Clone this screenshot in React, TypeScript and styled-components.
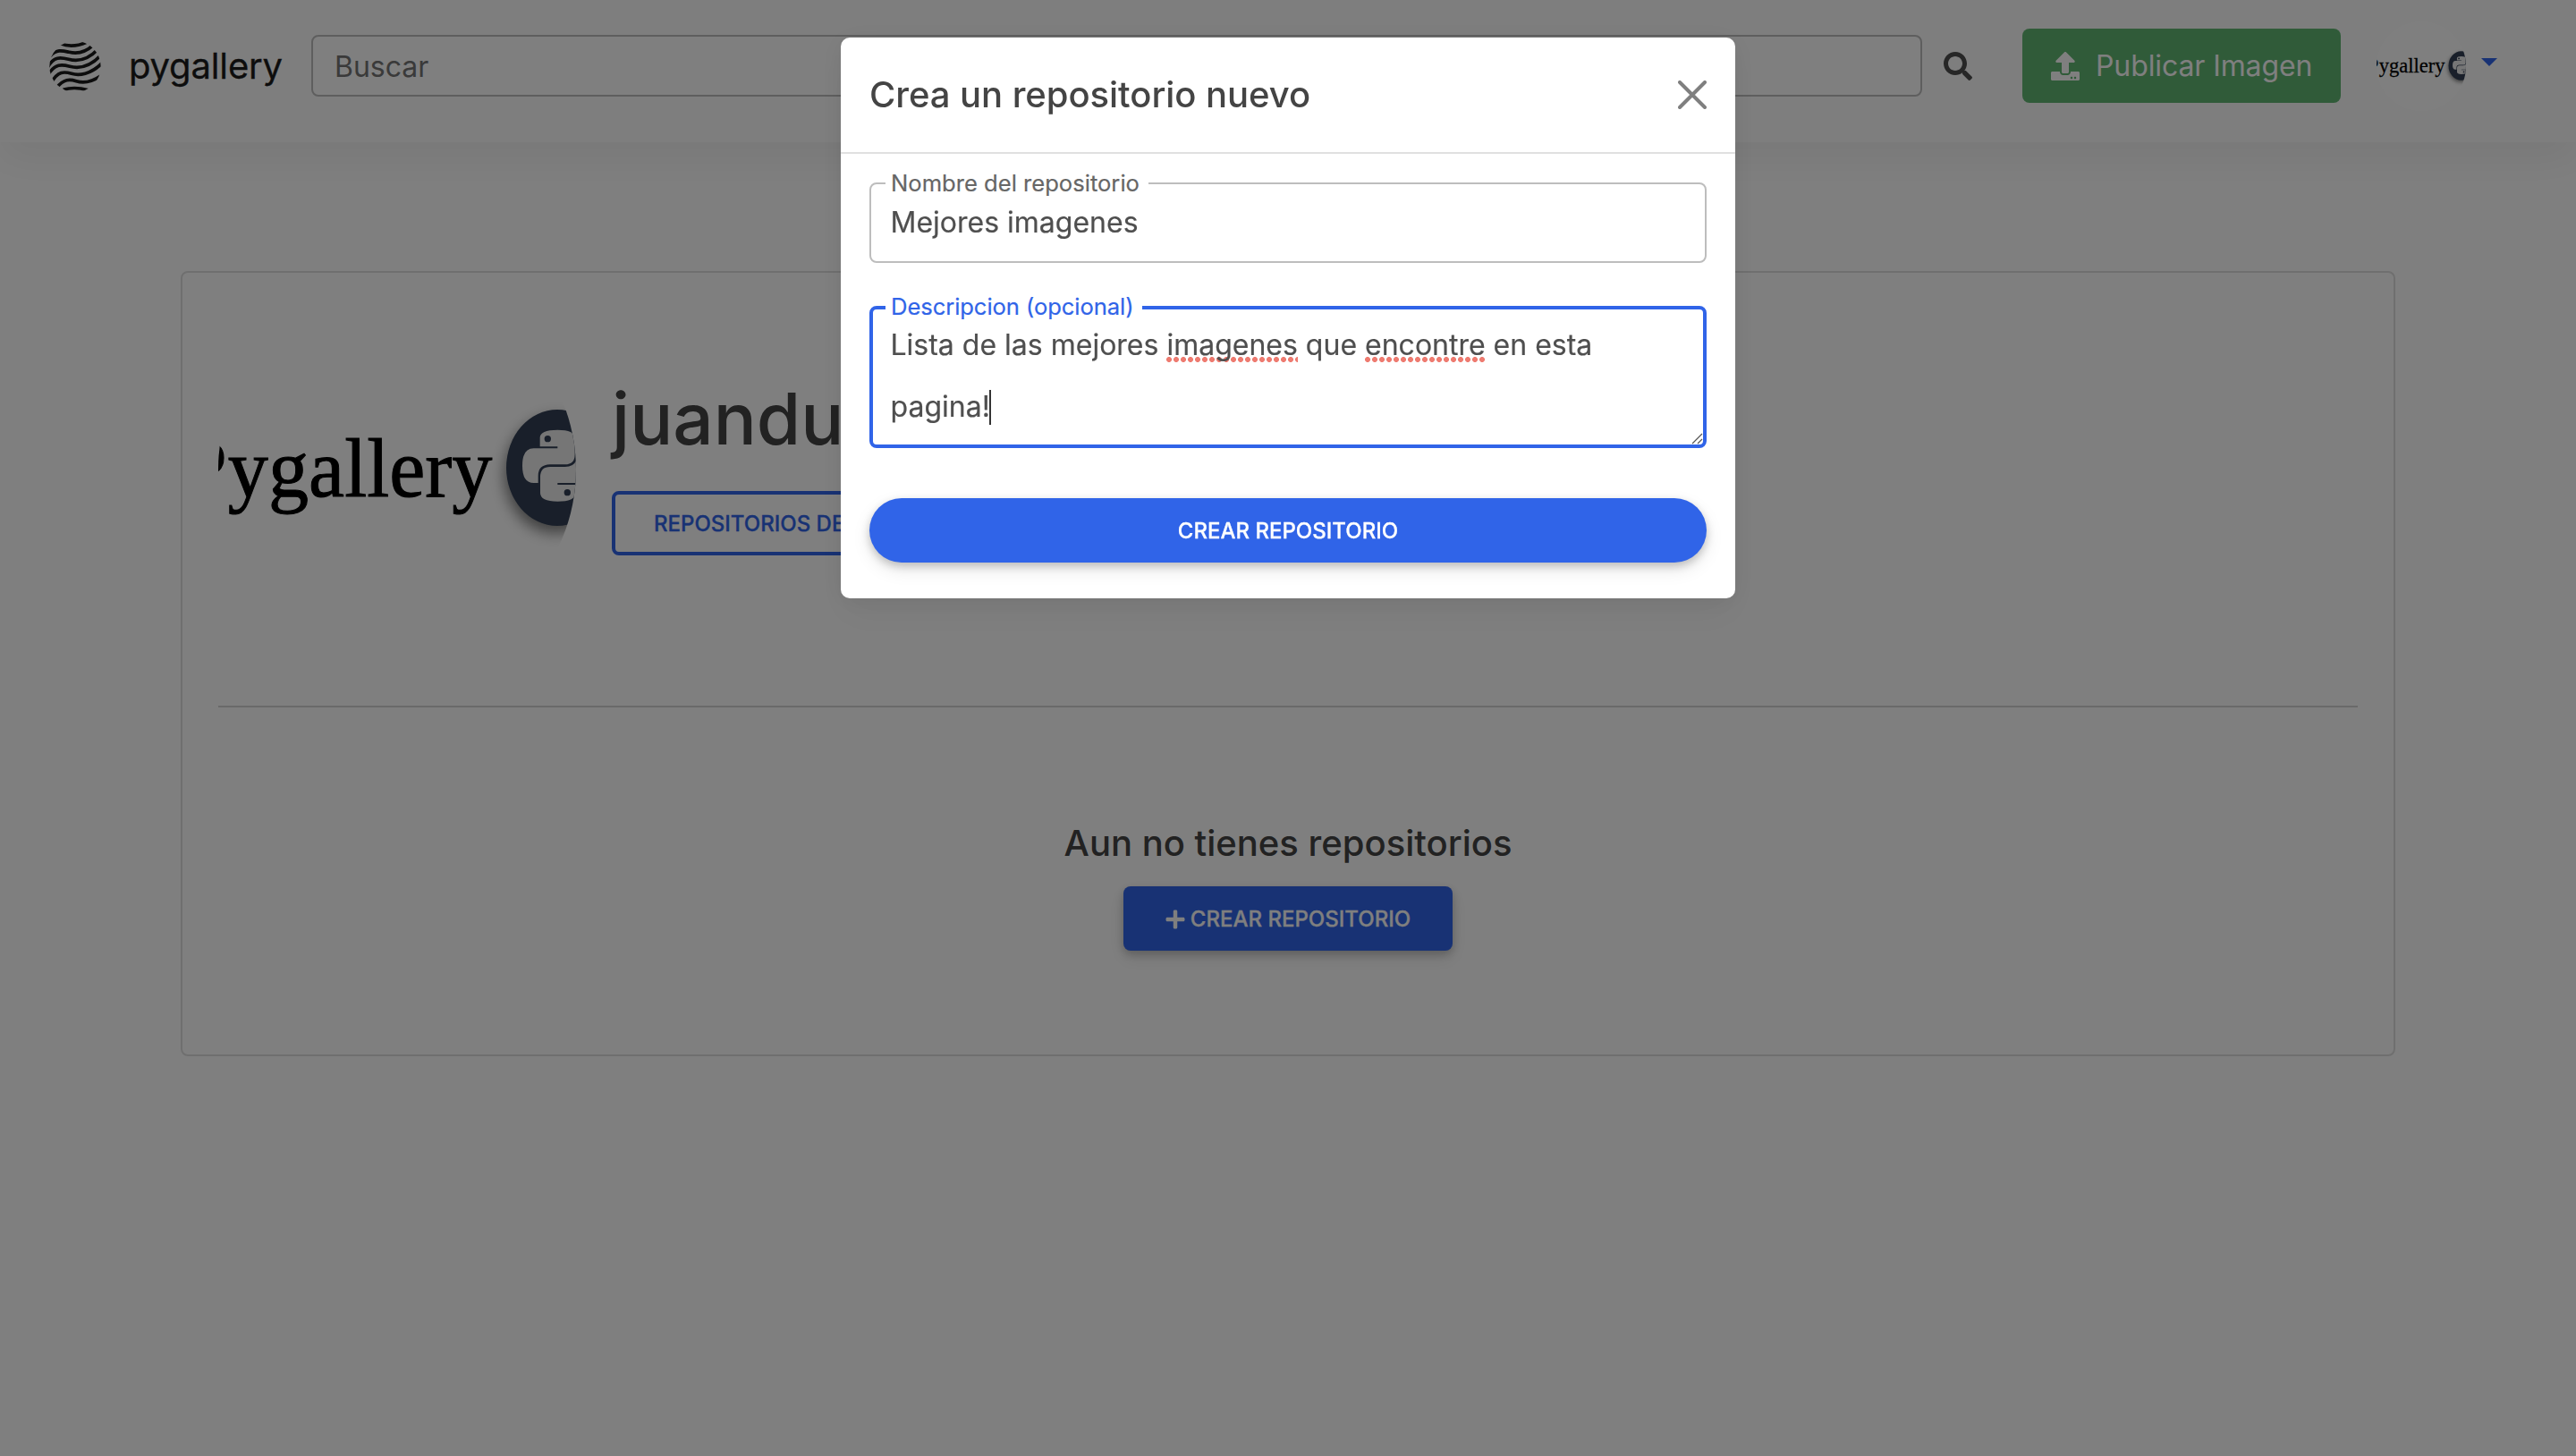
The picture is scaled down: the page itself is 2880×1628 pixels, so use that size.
import React from "react";
import styled, { createGlobalStyle, css } from "styled-components";
import { FaPlus, FaSearch, FaUpload } from "react-icons/fa";

const BLUE = "#3064e8";

const GlobalStyle = createGlobalStyle`
  *, *::before, *::after { box-sizing: border-box; }
  html, body { margin: 0; height: 100%; overflow: hidden; background: #fff; }
  body {
    font-family: Inter, Roboto, "Liberation Sans", sans-serif;
    font-size: 32px;
    color: #444;
  }
  h1, h2, p { margin: 0; font-weight: 500; }
  button { font-family: inherit; border: 0; cursor: pointer; }
`;

const Page = styled.div`
  height: 1628px;
  overflow: hidden;
  background: #fff;
`;

const Navbar = styled.header`
  height: 159px;
  padding: 0 87px 12px 55px;
  display: flex;
  align-items: center;
  background: #fcfcfc;
  box-shadow: 0 20px 40px rgba(0, 0, 0, 0.055);
`;

const Brand = styled.div`
  width: 293px;
  display: flex;
  align-items: center;
  gap: 30px;
  font-size: 40px;
  line-height: 60px;
  letter-spacing: -0.15px;
  color: #1b1b1b;
  -webkit-text-stroke: 0.3px currentColor;
`;

const SearchBox = styled.div`
  width: 1801px;
  height: 69px;
  padding: 2px 24px 0;
  display: flex;
  align-items: center;
  border: 2px solid #bdbdbd;
  border-radius: 8px;
  background: #fff;
  color: #757575;
`;

const SearchIcon = styled(FaSearch)`
  width: 32px;
  height: 32px;
  margin-left: 24px;
  color: #4f4f4f;
`;

const PublishButton = styled.button`
  width: 356px;
  height: 83px;
  margin-left: 56px;
  padding: 0 32px;
  display: flex;
  align-items: center;
  gap: 18px;
  border-radius: 8px;
  background: #60b672;
  color: #fff;
  font-size: 32px;
  letter-spacing: -0.1px;
  white-space: nowrap;

  svg { width: 32px; height: 32px; flex: none; }
`;

const UserMenu = styled.div`
  margin-left: 40px;
  display: flex;
  align-items: center;
  gap: 17px;
`;

const Caret = styled.span`
  border: 9.6px solid transparent;
  border-top-color: ${BLUE};
  border-bottom: 0;
  margin-top: -8px;
`;

const AvatarFrame = styled.div<{ $size: number }>`
  flex: none;
  width: ${(p) => p.$size}px;
  height: ${(p) => p.$size}px;
  border-radius: 50%;
  overflow: hidden;
  background: #fff;

  svg { display: block; width: 100%; height: 100%; }
`;

const Card = styled.main`
  width: 2476px;
  height: 878px;
  margin: 144px 0 0 202px;
  padding: 20px 40px;
  border: 2px solid #dfdfdf;
  border-radius: 8px;
`;

const Profile = styled.section`
  display: flex;
  height: 466px;
  gap: 40px;
  border-bottom: 2px solid #d4d4d4;
`;

const ProfileInfo = styled.div`
  display: flex;
  flex-direction: column;
  align-items: flex-start;
  padding-top: 95px;
`;

const UserName = styled.h1`
  font-size: 80px;
  line-height: 96px;
  margin-bottom: 33px;
`;

const buttonText = css`
  font-size: 24px;
  font-weight: 500;
  line-height: 36px;
  white-space: nowrap;
  -webkit-text-stroke: 0.3px currentColor;
`;

const OutlineButton = styled.button`
  ${buttonText}
  width: 420px;
  height: 72px;
  padding: 2px 43px 0;
  text-align: left;
  border: 4px solid ${BLUE};
  border-radius: 8px;
  background: transparent;
  color: ${BLUE};
`;

const EmptyState = styled.section`
  display: flex;
  flex-direction: column;
  align-items: center;
  padding-top: 128px;
`;

const EmptyTitle = styled.h2`
  font-size: 40px;
  line-height: 48px;
  margin-bottom: 24px;
`;

const SolidButton = styled.button<{ $pill?: boolean }>`
  ${buttonText}
  width: ${(p) => (p.$pill ? "100%" : "368px")};
  height: 72px;
  padding: 2px 0 0;
  display: flex;
  align-items: center;
  justify-content: center;
  gap: 6px;
  border-radius: ${(p) => (p.$pill ? 36 : 8)}px;
  background: ${BLUE};
  color: #fff;
  box-shadow: 0 4px 10px rgba(0, 0, 0, 0.2), 0 8px 20px rgba(0, 0, 0, 0.1);

  svg { width: 22px; height: 24px; }
`;

const Backdrop = styled.div`
  position: fixed;
  inset: 0;
  display: flex;
  justify-content: center;
  align-items: flex-start;
  padding-top: 42px;
  background: rgba(0, 0, 0, 0.5);
`;

const Dialog = styled.div`
  width: 1000px;
  height: 627px;
  border-radius: 10px;
  background: #fff;
  box-shadow: 0 4px 30px rgba(0, 0, 0, 0.07), 0 20px 40px rgba(0, 0, 0, 0.04);
`;

const DialogHeader = styled.div`
  height: 130px;
  padding: 0 32px;
  display: flex;
  align-items: center;
  justify-content: space-between;
  border-bottom: 2px solid #e0e0e0;

  svg { width: 32px; height: 32px; }
`;

const DialogTitle = styled.h2`
  font-size: 40px;
  line-height: 60px;
  letter-spacing: -0.05px;
`;

const DialogBody = styled.form`
  padding: 32px;
  display: flex;
  flex-direction: column;
`;

const Field = styled.div<{ $active?: boolean }>`
  position: relative;
  height: ${(p) => (p.$active ? 159 : 90)}px;
  margin-bottom: ${(p) => (p.$active ? 56 : 48)}px;
  padding: ${(p) => (p.$active ? "6px 19.5px" : "10px 21.5px")};
  border: ${(p) => (p.$active ? `4px solid ${BLUE}` : "2px solid #bdbdbd")};
  border-radius: 8px;
  line-height: 68.8px;
  color: #4f4f4f;
  -webkit-text-stroke: 0.2px currentColor;
`;

const FieldLabel = styled.label<{ $active?: boolean }>`
  position: absolute;
  top: ${(p) => (p.$active ? -20 : -18)}px;
  left: ${(p) => (p.$active ? 14 : 16)}px;
  padding: 0 10px 0 6px;
  background: #fff;
  color: ${(p) => (p.$active ? BLUE : "#666")};
  font-size: 25.6px;
  line-height: 34px;
  letter-spacing: ${(p) => (p.$active ? "-0.08px" : "0")};
  white-space: nowrap;
`;

const InputText = styled.p`
  font-weight: 400;
  line-height: 66px;
`;

const AreaText = styled.p`
  font-weight: 400;
`;

const Misspelled = styled.span`
  background: radial-gradient(circle at 3px 3px, #ee7b70 2.7px, transparent 3.2px) 0 100% / 8px 6px repeat-x;
`;

const TextCursor = styled.span`
  display: inline-block;
  width: 2px;
  height: 39px;
  margin-left: -1px;
  vertical-align: -9px;
  background: #333;
`;

const ResizeGrip = styled.svg`
  position: absolute;
  right: 0;
  bottom: 0;
  width: 14px;
  height: 14px;
`;

const WaveLogo = () => (
  <svg width="59" height="57" viewBox="73 47 177 171" fill="none" stroke="#1b1b1b" strokeWidth="11">
    <clipPath id="globe">
      <circle cx="160" cy="135.5" r="86" />
    </clipPath>
    <g clipPath="url(#globe)">
      <path d="M110 58C135 68 165 68 198 54" />
      <path d="M76 100C98 76 118 82 140 87S190 92 220 64" />
      <path d="M68 138C88 100 112 104 138 111S198 118 236 78" />
      <path d="M68 165C92 124 116 128 142 135S206 141 248 96" />
      <path d="M80 190C102 149 124 152 148 159S212 163 252 122" />
      <path d="M98 206C122 176 142 177 164 184S210 191 246 166" />
      <path d="M120 213C145 205 170 205 204 214" />
    </g>
  </svg>
);

const SNAKE =
  "M1121 178V148Q1121 122 1180 122Q1238 122 1238 150V204Q1238 238 1205 238H1155Q1115 239 1115 276V300H1100Q1062 300 1062 242Q1062 184 1100 184H1180V178Z";

const Avatar = ({ size }: { size: number }) => (
  <AvatarFrame $size={size}>
    <svg viewBox="244 325 400 400">
      <defs>
        <filter
          id={`shade-${size}`}
          x="-50%"
          y="-50%"
          width="200%"
          height="200%"
          colorInterpolationFilters="sRGB"
        >
          <feDropShadow dx="-2" dy="8" stdDeviation="8" floodOpacity="0.5" />
        </filter>
      </defs>
      <g
        transform="scale(0.96 1)"
        fontFamily="'Liberation Serif', serif"
        fontSize="94"
        fill="#000"
        stroke="#000"
        strokeWidth="1"
      >
        <text x="212" y="555">P</text>
        <text x="265.5" y="555">ygallery</text>
      </g>
      <ellipse cx="623" cy="523" rx="57" ry="65" fill="#323f54" filter={`url(#shade-${size})`} />
      <g transform="translate(230 440) scale(0.33333)" fill="#ececec">
        <path d={SNAKE} />
        <path d={SNAKE} transform="rotate(180 1180 242)" />
        <circle cx="1147" cy="152" r="11" fill="#323f54" />
        <circle cx="1213" cy="332" r="11" fill="#323f54" />
      </g>
    </svg>
  </AvatarFrame>
);

const CloseIcon = () => (
  <svg viewBox="0 0 32 32" stroke="#7f7f7f" strokeWidth="4" strokeLinecap="round">
    <path d="M2 2L30 30M30 2L2 30" />
  </svg>
);

export default function App() {
  return (
    <>
      <GlobalStyle />
      <Page>
        <Navbar>
          <Brand>
            <WaveLogo />
            <span>pygallery</span>
          </Brand>
          <SearchBox>Buscar</SearchBox>
          <SearchIcon />
          <PublishButton>
            <FaUpload />
            <span>Publicar Imagen</span>
          </PublishButton>
          <UserMenu>
            <Avatar size={100} />
            <Caret />
          </UserMenu>
        </Navbar>
        <Card>
          <Profile>
            <Avatar size={400} />
            <ProfileInfo>
              <UserName>juandu</UserName>
              <OutlineButton>REPOSITORIOS DE</OutlineButton>
            </ProfileInfo>
          </Profile>
          <EmptyState>
            <EmptyTitle>Aun no tienes repositorios</EmptyTitle>
            <SolidButton>
              <FaPlus />
              <span>CREAR REPOSITORIO</span>
            </SolidButton>
          </EmptyState>
        </Card>
      </Page>
      <Backdrop>
        <Dialog role="dialog">
          <DialogHeader>
            <DialogTitle>Crea un repositorio nuevo</DialogTitle>
            <CloseIcon />
          </DialogHeader>
          <DialogBody>
            <Field>
              <FieldLabel>Nombre del repositorio</FieldLabel>
              <InputText>Mejores imagenes</InputText>
            </Field>
            <Field $active>
              <FieldLabel $active>Descripcion (opcional)</FieldLabel>
              <AreaText>
                Lista de las mejores <Misspelled>imagenes</Misspelled> que <Misspelled>encontre</Misspelled> en esta
                <br />
                pagina!
                <TextCursor />
              </AreaText>
              <ResizeGrip viewBox="0 0 14 14" stroke="#555" strokeWidth="1.2">
                <path d="M2 13L13 2M8 13L13 8" />
              </ResizeGrip>
            </Field>
            <SolidButton $pill type="button">
              CREAR REPOSITORIO
            </SolidButton>
          </DialogBody>
        </Dialog>
      </Backdrop>
    </>
  );
}
